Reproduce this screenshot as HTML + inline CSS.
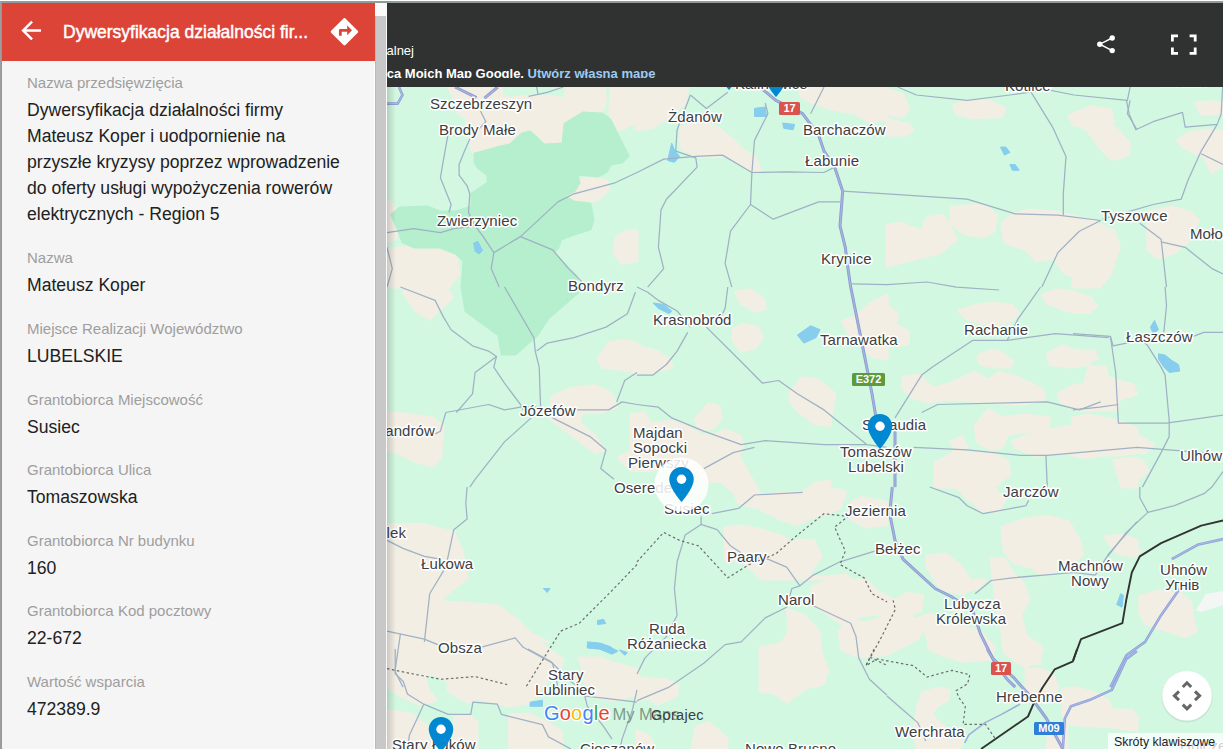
<!DOCTYPE html>
<html><head><meta charset="utf-8">
<style>
*{margin:0;padding:0;box-sizing:border-box}
html,body{width:1223px;height:749px;overflow:hidden;background:#fff;font-family:"Liberation Sans",sans-serif}
#map{position:absolute;left:0;top:0}
.ab{position:absolute}
.lb{position:absolute;left:27px;font-size:15px;color:#9e9e9e;line-height:17px;white-space:nowrap}
.vl{position:absolute;left:27px;font-size:17.6px;color:#212121;line-height:26px;white-space:nowrap}
</style></head><body>
<svg id="map" width="1223" height="749" viewBox="0 0 1223 749"><rect x="387" y="87" width="836" height="662" fill="#d3f8e2"/><polygon points="574.0,180.5 590.0,177.8 606.0,180.5 608.7,188.5 598.0,199.2 579.3,204.5 568.6,199.2" fill="#f3eee4" stroke="#f3eee4" stroke-width="3" stroke-linejoin="round"/><polygon points="616.7,236.6 627.4,231.2 637.0,231.2 637.0,260.6 622.0,263.3 614.0,252.6" fill="#f3eee4" stroke="#f3eee4" stroke-width="3" stroke-linejoin="round"/><polygon points="387.0,249.9 403.0,247.3 440.4,249.9 456.4,257.9 459.1,274.0 448.4,287.1 387.0,287.1" fill="#f3eee4" stroke="#f3eee4" stroke-width="3" stroke-linejoin="round"/><polygon points="387.0,199.2 392.3,204.5 400.4,225.9 395.0,239.2 387.0,241.9" fill="#f3eee4" stroke="#f3eee4" stroke-width="3" stroke-linejoin="round"/><polygon points="637.0,87.0 687.7,87.0 685.1,103.0 669.1,116.4 653.0,127.1 637.0,129.7" fill="#f3eee4" stroke="#f3eee4" stroke-width="3" stroke-linejoin="round"/><polygon points="681.1,127.1 698.4,123.1 717.1,127.1 733.2,140.4 743.8,151.1 754.5,156.4 759.9,169.8 749.2,169.8 741.2,164.5 725.1,156.4 695.8,156.4 682.4,148.4 679.7,137.7" fill="#f3eee4" stroke="#f3eee4" stroke-width="3" stroke-linejoin="round"/><polygon points="797.3,87.0 887.0,87.0 887.0,119.1 869.4,121.7 856.0,113.7 829.3,108.4 813.3,103.0 802.6,97.7" fill="#f3eee4" stroke="#f3eee4" stroke-width="3" stroke-linejoin="round"/><polygon points="887.0,89.7 903.0,95.0 908.4,108.4 903.0,116.4 887.0,113.7" fill="#f3eee4" stroke="#f3eee4" stroke-width="3" stroke-linejoin="round"/><polygon points="887.0,119.1 908.4,124.4 912.4,129.7 905.7,135.1 887.0,135.1" fill="#f3eee4" stroke="#f3eee4" stroke-width="3" stroke-linejoin="round"/><polygon points="953.8,105.7 967.1,100.4 988.5,100.4 1004.5,108.4 1001.9,116.4 972.5,117.7 956.4,113.7" fill="#f3eee4" stroke="#f3eee4" stroke-width="3" stroke-linejoin="round"/><polygon points="1068.6,116.4 1090.0,107.0 1108.7,109.7 1111.4,124.4 1119.4,132.4 1130.1,144.4 1124.7,156.4 1111.4,159.1 1100.7,148.4 1087.3,129.7 1074.0,123.1" fill="#f3eee4" stroke="#f3eee4" stroke-width="3" stroke-linejoin="round"/><polygon points="951.1,207.2 967.1,205.9 983.2,204.5 996.5,215.2 993.8,231.2 983.2,236.6 964.5,233.9 951.1,223.2" fill="#f3eee4" stroke="#f3eee4" stroke-width="3" stroke-linejoin="round"/><polygon points="887.0,225.9 900.4,223.2 921.7,231.2 927.1,217.9 943.1,215.2 956.4,239.2 940.4,252.6 919.1,257.9 897.7,263.3 887.0,266.0" fill="#f3eee4" stroke="#f3eee4" stroke-width="3" stroke-linejoin="round"/><polygon points="1001.9,223.2 1012.5,215.2 1028.6,209.9 1057.9,212.5 1090.0,220.5 1114.0,231.2 1119.4,247.3 1108.7,274.0 1090.0,279.3 1066.0,274.0 1052.6,257.9 1036.6,260.6 1025.9,249.9 1004.5,241.9" fill="#f3eee4" stroke="#f3eee4" stroke-width="3" stroke-linejoin="round"/><polygon points="1073.0,113.7 1089.0,108.4 1110.4,109.7 1113.1,121.7 1107.7,132.4 1126.4,140.4 1129.1,153.8 1115.7,159.1 1102.4,148.4 1089.0,127.1 1073.0,124.4" fill="#f3eee4" stroke="#f3eee4" stroke-width="3" stroke-linejoin="round"/><polygon points="1195.9,103.0 1211.9,101.7 1223.1,103.0 1223.1,113.7 1201.2,113.7" fill="#f3eee4" stroke="#f3eee4" stroke-width="3" stroke-linejoin="round"/><polygon points="1177.2,140.4 1190.5,132.4 1211.9,129.7 1223.1,132.4 1223.1,164.5 1211.9,172.5 1203.9,156.4 1185.2,148.4" fill="#f3eee4" stroke="#f3eee4" stroke-width="3" stroke-linejoin="round"/><polygon points="1073.0,223.2 1094.4,220.5 1110.4,236.6 1118.4,247.3 1110.4,274.0 1099.7,287.1 1073.0,287.1" fill="#f3eee4" stroke="#f3eee4" stroke-width="3" stroke-linejoin="round"/><polygon points="1147.8,212.5 1171.8,207.2 1190.5,212.5 1198.5,220.5 1187.9,241.9 1174.5,252.6 1158.5,257.9 1147.8,249.9" fill="#f3eee4" stroke="#f3eee4" stroke-width="3" stroke-linejoin="round"/><polygon points="408.4,287.0 445.8,287.0 452.4,297.7 440.4,308.4 429.7,319.1 416.4,311.0 403.0,292.3" fill="#f3eee4" stroke="#f3eee4" stroke-width="3" stroke-linejoin="round"/><polygon points="598.0,359.1 608.7,343.1 622.0,340.4 637.0,343.1 637.0,372.5 622.0,369.8 603.3,367.1" fill="#f3eee4" stroke="#f3eee4" stroke-width="3" stroke-linejoin="round"/><polygon points="552.6,396.5 571.3,388.5 595.3,385.8 611.4,393.8 616.7,407.2 600.7,412.5 582.0,412.5 579.3,423.2 595.3,436.6 603.3,449.9 595.3,452.6 574.0,436.6 552.6,420.5 549.9,409.9" fill="#f3eee4" stroke="#f3eee4" stroke-width="3" stroke-linejoin="round"/><polygon points="387.0,412.5 403.0,413.9 432.4,417.9 443.1,425.9 440.4,457.9 432.4,466.0 413.7,460.6 397.7,452.6 387.0,449.9" fill="#f3eee4" stroke="#f3eee4" stroke-width="3" stroke-linejoin="round"/><polygon points="735.8,292.3 749.2,289.7 762.5,297.7 765.2,308.4 754.5,311.0 741.2,303.0" fill="#f3eee4" stroke="#f3eee4" stroke-width="3" stroke-linejoin="round"/><polygon points="733.2,329.7 743.8,324.4 757.2,327.1 762.5,337.7 754.5,348.4 741.2,351.1 733.2,340.4" fill="#f3eee4" stroke="#f3eee4" stroke-width="3" stroke-linejoin="round"/><polygon points="637.0,345.8 655.7,351.1 669.1,359.1 671.7,367.1 653.0,372.5 637.0,372.5" fill="#f3eee4" stroke="#f3eee4" stroke-width="3" stroke-linejoin="round"/><polygon points="842.7,321.7 856.0,316.4 872.0,303.0 887.0,295.0 887.0,359.1 872.0,356.4 864.0,348.4 848.0,332.4" fill="#f3eee4" stroke="#f3eee4" stroke-width="3" stroke-linejoin="round"/><polygon points="789.2,393.8 802.6,377.8 818.6,380.5 834.6,393.8 832.0,412.5 829.3,425.9 813.3,420.5 797.3,409.9" fill="#f3eee4" stroke="#f3eee4" stroke-width="3" stroke-linejoin="round"/><polygon points="887.0,305.7 897.7,313.7 895.0,324.4 908.4,332.4 908.4,343.1 897.7,345.8 887.0,340.4" fill="#f3eee4" stroke="#f3eee4" stroke-width="3" stroke-linejoin="round"/><polygon points="959.1,311.0 975.1,305.7 993.8,303.0 1012.5,305.7 1017.9,313.7 1009.9,321.7 988.5,324.4 967.1,319.1" fill="#f3eee4" stroke="#f3eee4" stroke-width="3" stroke-linejoin="round"/><polygon points="1041.9,295.0 1057.9,289.7 1074.0,292.3 1090.0,297.7 1095.3,305.7 1084.6,311.0 1068.6,311.0 1047.3,303.0" fill="#f3eee4" stroke="#f3eee4" stroke-width="3" stroke-linejoin="round"/><polygon points="977.8,356.4 988.5,351.1 999.2,351.1 1012.5,361.8 1009.9,367.1 993.8,367.1 980.5,364.5" fill="#f3eee4" stroke="#f3eee4" stroke-width="3" stroke-linejoin="round"/><polygon points="1047.3,353.8 1063.3,345.8 1076.6,351.1 1084.6,351.1 1095.3,356.4 1087.3,364.5 1068.6,367.1 1049.9,364.5" fill="#f3eee4" stroke="#f3eee4" stroke-width="3" stroke-linejoin="round"/><polygon points="903.0,377.8 919.1,375.1 932.4,388.5 951.1,383.2 975.1,372.5 988.5,380.5 999.2,372.5 1017.9,377.8 1041.9,388.5 1044.6,399.2 1020.5,404.5 988.5,401.9 945.8,399.2 927.1,401.9 911.0,396.5 903.0,388.5" fill="#f3eee4" stroke="#f3eee4" stroke-width="3" stroke-linejoin="round"/><polygon points="1057.9,393.8 1074.0,385.8 1092.7,383.2 1090.0,367.1 1100.7,369.8 1114.0,388.5 1132.7,388.5 1137.0,393.8 1119.4,399.2 1116.7,409.9 1079.3,409.9 1060.6,401.9" fill="#f3eee4" stroke="#f3eee4" stroke-width="3" stroke-linejoin="round"/><polygon points="975.1,425.9 988.5,409.9 1001.9,417.9 1025.9,415.2 1049.9,417.9 1047.3,428.6 1007.2,433.9 1001.9,447.3 991.2,449.9 977.8,441.9" fill="#f3eee4" stroke="#f3eee4" stroke-width="3" stroke-linejoin="round"/><polygon points="1012.5,441.9 1036.6,431.2 1074.0,425.9 1095.3,417.9 1116.7,420.5 1137.0,428.6 1137.0,452.6 1114.0,455.3 1074.0,452.6 1036.6,455.3 1015.2,447.3" fill="#f3eee4" stroke="#f3eee4" stroke-width="3" stroke-linejoin="round"/><polygon points="951.1,441.9 961.8,436.6 967.1,447.3 956.4,452.6" fill="#f3eee4" stroke="#f3eee4" stroke-width="3" stroke-linejoin="round"/><polygon points="935.1,463.3 953.8,452.6 988.5,452.6 1007.2,460.6 1009.9,474.0 993.8,487.1 935.1,487.1" fill="#f3eee4" stroke="#f3eee4" stroke-width="3" stroke-linejoin="round"/><polygon points="1114.0,460.6 1137.0,457.9 1137.0,487.1 1122.0,487.1" fill="#f3eee4" stroke="#f3eee4" stroke-width="3" stroke-linejoin="round"/><polygon points="1073.0,297.7 1086.4,296.3 1097.0,305.7 1089.0,312.4 1073.0,312.4" fill="#f3eee4" stroke="#f3eee4" stroke-width="3" stroke-linejoin="round"/><polygon points="1073.0,351.1 1094.4,351.1 1097.0,359.1 1073.0,361.8" fill="#f3eee4" stroke="#f3eee4" stroke-width="3" stroke-linejoin="round"/><polygon points="1089.0,367.1 1105.1,367.1 1107.7,377.8 1134.4,385.8 1126.4,396.5 1110.4,401.9 1089.0,401.9 1073.0,404.5 1073.0,388.5 1083.7,385.8" fill="#f3eee4" stroke="#f3eee4" stroke-width="3" stroke-linejoin="round"/><polygon points="1073.0,417.9 1089.0,415.2 1115.7,420.5 1134.4,433.9 1153.1,444.6 1145.1,452.6 1113.1,452.6 1086.4,457.9 1073.0,455.3" fill="#f3eee4" stroke="#f3eee4" stroke-width="3" stroke-linejoin="round"/><polygon points="1126.4,463.3 1142.4,460.6 1147.8,471.3 1137.1,479.3 1126.4,474.0" fill="#f3eee4" stroke="#f3eee4" stroke-width="3" stroke-linejoin="round"/><polygon points="387.0,524.4 421.7,524.4 453.8,532.4 461.8,551.1 467.1,577.8 440.4,599.2 448.4,604.5 488.5,604.5 504.5,612.5 517.9,625.9 525.9,633.9 547.3,641.9 531.2,633.9 496.5,605.9 411.0,599.2 399.0,609.9 399.0,631.2 387.0,635.2" fill="#f3eee4" stroke="#f3eee4" stroke-width="3" stroke-linejoin="round"/><polygon points="579.3,657.9 600.7,657.9 619.4,666.0 637.0,671.3 637.0,687.1 590.0,687.1" fill="#f3eee4" stroke="#f3eee4" stroke-width="3" stroke-linejoin="round"/><polygon points="733.2,487.0 749.2,487.0 765.2,497.7 802.6,492.3 824.0,487.0 845.3,492.3 840.0,508.4 824.0,513.7 807.9,519.1 797.3,524.4 781.2,519.1 759.9,508.4 738.5,503.0" fill="#f3eee4" stroke="#f3eee4" stroke-width="3" stroke-linejoin="round"/><polygon points="850.7,503.0 861.4,497.7 877.4,500.4 887.0,503.0 887.0,524.4 866.7,527.1 850.7,519.1" fill="#f3eee4" stroke="#f3eee4" stroke-width="3" stroke-linejoin="round"/><polygon points="727.8,532.4 743.8,529.7 759.9,540.4 778.6,545.8 797.3,540.4 813.3,540.4 821.3,556.4 807.9,575.1 824.0,577.8 845.3,575.1 850.7,579.1 762.5,579.1 749.2,567.1 730.5,553.8" fill="#f3eee4" stroke="#f3eee4" stroke-width="3" stroke-linejoin="round"/><polygon points="956.4,487.0 993.8,487.0 1004.5,500.4 999.2,511.0 983.2,511.0 967.1,497.7" fill="#f3eee4" stroke="#f3eee4" stroke-width="3" stroke-linejoin="round"/><polygon points="1001.9,527.1 1025.9,519.1 1047.3,516.4 1068.6,521.7 1079.3,540.4 1082.0,553.8 1068.6,567.1 1041.9,575.1 1031.2,567.1 1012.5,561.8 1004.5,551.1" fill="#f3eee4" stroke="#f3eee4" stroke-width="3" stroke-linejoin="round"/><polygon points="1106.0,537.7 1122.0,535.1 1137.0,540.4 1137.0,551.1 1116.7,551.1" fill="#f3eee4" stroke="#f3eee4" stroke-width="3" stroke-linejoin="round"/><polygon points="927.1,556.4 945.8,553.8 959.1,564.5 967.1,575.1 972.5,588.5 961.8,593.8 940.4,588.5 927.1,567.1" fill="#f3eee4" stroke="#f3eee4" stroke-width="3" stroke-linejoin="round"/><polygon points="991.2,559.1 1004.5,559.1 1012.5,572.5 1023.2,583.2 1028.6,599.2 1020.5,615.2 1025.9,636.6 1041.9,647.3 1039.2,663.3 1020.5,663.3 1004.5,652.6 1001.9,631.2 996.5,604.5 993.8,583.2" fill="#f3eee4" stroke="#f3eee4" stroke-width="3" stroke-linejoin="round"/><polygon points="1052.6,679.3 1036.6,671.3 1025.9,687.1 1057.9,687.1" fill="#f3eee4" stroke="#f3eee4" stroke-width="3" stroke-linejoin="round"/><polygon points="1073.0,537.7 1081.0,545.8 1081.0,556.4 1073.0,559.1" fill="#f3eee4" stroke="#f3eee4" stroke-width="3" stroke-linejoin="round"/><polygon points="1105.1,537.7 1121.1,535.1 1129.1,545.8 1139.8,551.1 1134.4,556.4 1118.4,553.8" fill="#f3eee4" stroke="#f3eee4" stroke-width="3" stroke-linejoin="round"/><polygon points="1139.8,596.5 1158.5,591.2 1179.8,593.8 1190.5,601.9 1193.2,620.5 1195.9,631.2 1185.2,636.6 1161.1,628.6 1145.1,623.2 1139.8,612.5" fill="#f3eee4" stroke="#f3eee4" stroke-width="3" stroke-linejoin="round"/><polygon points="637.0,677.6 655.4,679.7 665.6,679.7 677.9,685.8 675.8,696.0 657.4,704.2 649.3,698.1 637.0,700.1" fill="#f3eee4" stroke="#f3eee4" stroke-width="3" stroke-linejoin="round"/><polygon points="696.3,726.7 708.5,722.6 718.8,730.8 726.9,738.9 726.9,749.0 692.2,749.0" fill="#f3eee4" stroke="#f3eee4" stroke-width="3" stroke-linejoin="round"/><polygon points="637.0,730.8 649.3,736.9 655.4,749.0 637.0,749.0" fill="#f3eee4" stroke="#f3eee4" stroke-width="3" stroke-linejoin="round"/><polygon points="841.4,649.0 872.1,649.0 870.0,655.1 853.7,655.1" fill="#f3eee4" stroke="#f3eee4" stroke-width="3" stroke-linejoin="round"/><polygon points="932.0,649.0 989.2,649.0 981.0,657.2 948.3,655.1" fill="#f3eee4" stroke="#f3eee4" stroke-width="3" stroke-linejoin="round"/><polygon points="1009.6,649.0 1042.4,649.0 1034.2,661.3 1026.0,667.4 1013.7,659.2" fill="#f3eee4" stroke="#f3eee4" stroke-width="3" stroke-linejoin="round"/><polygon points="1026.0,669.4 1042.4,669.4 1054.6,677.6 1056.7,689.9 1046.4,702.1 1034.2,702.1 1028.0,694.0 1026.0,681.7" fill="#f3eee4" stroke="#f3eee4" stroke-width="3" stroke-linejoin="round"/><polygon points="1062.8,689.9 1075.1,687.8 1091.4,691.9 1107.8,700.1 1111.9,710.3 1132.3,710.3 1137.0,716.5 1137.0,730.8 1111.9,726.7 1071.0,724.6 1062.8,714.4" fill="#f3eee4" stroke="#f3eee4" stroke-width="3" stroke-linejoin="round"/><polygon points="1050.5,726.7 1066.9,724.6 1066.9,749.0 1046.4,749.0" fill="#f3eee4" stroke="#f3eee4" stroke-width="3" stroke-linejoin="round"/><polygon points="387.0,634.8 399.3,632.7 399.3,610.2 411.5,600.0 497.4,606.1 517.8,620.4 530.1,634.8 550.5,651.1 562.8,659.3 560.8,667.5 550.5,677.7 542.4,685.9 530.1,702.2 509.6,706.3 476.9,698.1 468.8,702.2 456.5,696.1 448.3,689.9 448.3,681.8 438.1,675.6 423.8,673.6 427.9,689.9 436.1,700.2 419.7,704.3 401.3,696.1 387.0,685.9" fill="#f3eee4" stroke="#f3eee4" stroke-width="3" stroke-linejoin="round"/><polygon points="581.2,659.3 601.6,661.3 622.1,665.4 637.0,669.5 637.0,694.0 611.9,700.2 591.4,696.1 583.2,677.7" fill="#f3eee4" stroke="#f3eee4" stroke-width="3" stroke-linejoin="round"/><polygon points="387.0,710.4 411.5,714.5 421.8,722.6 434.0,730.8 432.0,749.0 387.0,749.0" fill="#f3eee4" stroke="#f3eee4" stroke-width="3" stroke-linejoin="round"/><polygon points="454.5,714.5 468.8,714.5 476.9,722.6 476.9,749.0 454.5,749.0" fill="#f3eee4" stroke="#f3eee4" stroke-width="3" stroke-linejoin="round"/><polygon points="509.6,714.5 530.1,714.5 546.4,722.6 560.8,730.8 562.8,749.0 509.6,749.0" fill="#f3eee4" stroke="#f3eee4" stroke-width="3" stroke-linejoin="round"/><polygon points="448.3,87.0 501.5,87.0 501.5,95.2 509.6,98.2 530.1,96.2 550.5,96.2 564.8,99.3 566.9,87.0 603.7,87.0 605.7,99.3 601.6,113.6 583.2,112.6 564.8,123.8 562.8,144.2 544.4,145.3 540.3,136.1 530.1,132.0 521.9,134.0 509.6,145.3 495.3,148.3 483.1,152.4 474.9,154.5 470.8,146.3 468.8,136.1 466.7,117.7 456.5,111.5 454.5,97.2" fill="#f3eee4" stroke="#f3eee4" stroke-width="3" stroke-linejoin="round"/><polygon points="611.9,132.0 624.1,127.9 637.0,121.8 637.0,87.0 611.9,87.0 609.8,107.4" fill="#f3eee4" stroke="#f3eee4" stroke-width="3" stroke-linejoin="round"/><polygon points="631.3,415.0 644.1,412.8 650.5,423.5 669.7,421.4 682.6,423.5 699.7,434.2 712.5,436.3 725.3,429.9 740.3,436.3 742.4,444.9 738.1,455.6 755.2,485.5 759.5,494.0 746.7,496.2 733.8,491.9 721.0,481.2 708.2,481.2 691.1,470.5 669.7,464.1 650.5,470.5 631.3,470.5 618.5,457.7 631.3,451.3 631.3,427.8" fill="#f3eee4" stroke="#f3eee4" stroke-width="3" stroke-linejoin="round"/><polygon points="695.4,419.2 708.2,404.3 718.9,406.4 721.0,419.2 712.5,427.8 699.7,429.9" fill="#f3eee4" stroke="#f3eee4" stroke-width="3" stroke-linejoin="round"/><polygon points="742.4,498.3 772.3,494.0 804.4,491.9 815.0,483.3 830.0,481.2 830.0,513.2 804.4,517.5 785.1,515.4 768.0,506.8" fill="#f3eee4" stroke="#f3eee4" stroke-width="3" stroke-linejoin="round"/><polygon points="789.4,400.0 830.0,400.0 830.0,425.6 815.0,423.5 800.1,412.8" fill="#f3eee4" stroke="#f3eee4" stroke-width="3" stroke-linejoin="round"/><polygon points="725.3,528.2 742.4,526.1 761.6,530.3 783.0,536.8 793.7,545.3 793.7,560.0 725.3,560.0" fill="#f3eee4" stroke="#f3eee4" stroke-width="3" stroke-linejoin="round"/><polygon points="787.1,609.3 805.1,616.1 818.7,631.9 820.9,652.2 827.7,670.3 823.2,683.8 805.1,688.3 787.1,701.8 773.5,692.8 760.0,690.6 760.0,647.7 782.6,643.2 789.3,629.6" fill="#f3eee4" stroke="#f3eee4" stroke-width="3" stroke-linejoin="round"/><polygon points="811.9,586.8 832.2,580.0 866.0,580.0 879.6,593.5 895.4,600.3 906.7,593.5 922.5,595.8 920.2,611.6 899.9,616.1 877.3,613.8 859.3,616.1 843.5,625.1 827.7,613.8 814.2,604.8" fill="#f3eee4" stroke="#f3eee4" stroke-width="3" stroke-linejoin="round"/><polygon points="839.0,631.9 850.3,620.6 866.0,622.9 886.4,616.1 906.7,613.8 924.7,625.1 917.9,638.7 899.9,647.7 886.4,654.5 859.3,656.7 841.2,645.4" fill="#f3eee4" stroke="#f3eee4" stroke-width="3" stroke-linejoin="round"/><polygon points="917.9,618.4 931.5,613.8 940.5,622.9 963.1,627.4 981.1,631.9 985.6,638.7 994.7,647.7 990.1,659.0 963.1,661.2 940.5,654.5 929.2,647.7 927.0,634.2" fill="#f3eee4" stroke="#f3eee4" stroke-width="3" stroke-linejoin="round"/><polygon points="958.6,580.0 985.6,580.0 976.6,589.0 963.1,589.0" fill="#f3eee4" stroke="#f3eee4" stroke-width="3" stroke-linejoin="round"/><polygon points="922.5,692.8 938.2,688.3 949.5,690.6 947.3,699.6 936.0,706.4 931.5,715.4 940.5,724.4 954.0,733.4 963.1,742.5 958.6,749.0 917.9,749.0 913.4,733.4 917.9,706.4" fill="#f3eee4" stroke="#f3eee4" stroke-width="3" stroke-linejoin="round"/><polygon points="475,154 490,150 500,147 510,145 522,134 530,132 544,145 563,144 565,124 583,113 602,114 610,120 624,148 628,156 622,162 611,164 606,172 598,176 577,174 579,183 574,191 563,196 574,202 590,204 593,220 590,229 574,234 561,239 558,247 553,253 576,276 578,292 548,318 537,335 515,354 502,354 499,335 466,311 462,287 464,261 456,253 440,247 414,247 403,242 398,229 392,215 400,208 427,207 440,212 456,212 472,207 472,194 488,183 488,175 478,167 475,162" fill="#b5efcd" stroke="#b5efcd" stroke-width="3" stroke-linejoin="round"/><polygon points="797.3,335.1 810.6,325.7 820.0,329.7 816.0,337.7 803.9,343.1" fill="#86cdee" stroke="#86cdee" stroke-width="1" stroke-linejoin="round"/><polygon points="653.0,303.0 663.7,304.4 671.7,311.0 669.1,313.7 658.4,308.4" fill="#86cdee" stroke="#86cdee" stroke-width="1" stroke-linejoin="round"/><polygon points="1150.5,327.1 1154.5,320.4 1158.5,329.7 1153.1,333.7" fill="#86cdee" stroke="#86cdee" stroke-width="1" stroke-linejoin="round"/><polygon points="1158.5,353.8 1165.1,355.1 1171.8,360.5 1178.5,364.5 1179.8,371.1 1169.2,372.5 1163.8,367.1 1158.5,359.1" fill="#86cdee" stroke="#86cdee" stroke-width="1" stroke-linejoin="round"/><polygon points="587.1,641.9 600.7,643.2 611.4,647.3 606.0,649.9 590.0,647.3" fill="#86cdee" stroke="#86cdee" stroke-width="1" stroke-linejoin="round"/><polygon points="619.4,649.9 627.4,652.6 624.7,655.3" fill="#86cdee" stroke="#86cdee" stroke-width="1" stroke-linejoin="round"/><polygon points="543.2,588.5 549.9,588.5 547.3,592.5" fill="#86cdee" stroke="#86cdee" stroke-width="1" stroke-linejoin="round"/><polygon points="667.7,160.5 671.7,143.1 674.9,151.1 679.7,156.4 674.4,162.3" fill="#86cdee" stroke="#86cdee" stroke-width="1" stroke-linejoin="round"/><polygon points="754.5,108.4 765.2,107.0 766.5,116.4 754.5,116.4" fill="#86cdee" stroke="#86cdee" stroke-width="1" stroke-linejoin="round"/><polygon points="782.6,123.1 794.6,124.4 793.2,129.7 783.9,128.4" fill="#86cdee" stroke="#86cdee" stroke-width="1" stroke-linejoin="round"/><polygon points="1116.7,604.5 1120.7,593.8 1123.4,595.2 1122.0,607.2" fill="#86cdee" stroke="#86cdee" stroke-width="1" stroke-linejoin="round"/><polygon points="473.8,243.2 477.8,241.4 482.6,250.5 479.1,253.9 475.1,251.3" fill="#86cdee" stroke="#86cdee" stroke-width="1" stroke-linejoin="round"/><polygon points="530.1,702.2 542.4,700.2 542.4,706.3 530.1,706.3" fill="#86cdee" stroke="#86cdee" stroke-width="1" stroke-linejoin="round"/><polygon points="597.5,620.4 603.7,619.4 605.7,623.5 597.5,624.5" fill="#86cdee" stroke="#86cdee" stroke-width="1" stroke-linejoin="round"/><polygon points="587.3,643.9 595.5,642.9 607.8,646.0 618.0,651.1 611.9,654.2 599.6,649.1 587.3,648.0" fill="#86cdee" stroke="#86cdee" stroke-width="1" stroke-linejoin="round"/><polygon points="1000.5,147.1 1005.9,147.1 1009.9,152.4 1004.5,155.1" fill="#86cdee" stroke="#86cdee" stroke-width="1" stroke-linejoin="round"/><polygon points="1009.9,164.5 1015.2,164.5 1019.2,170.3 1012.5,170.3" fill="#86cdee" stroke="#86cdee" stroke-width="1" stroke-linejoin="round"/><polygon points="1196,610 1206,594 1223,591 1223,605 1201,612" fill="#f4f6f5"/><polyline points="480.5,111.0 485.8,121.7 469.8,139.1 464.5,151.1 459.1,164.5 459.1,175.1 467.1,185.8 469.8,193.8 468.5,212.5 475.1,225.9 483.2,236.6 493.8,252.6 491.2,268.6 499.2,287.1" fill="none" stroke="#9fb1c4" stroke-width="1.25" stroke-linejoin="round"/><polyline points="387.0,232.6 413.7,228.6 440.4,232.6 453.8,228.6 475.1,225.9" fill="none" stroke="#9fb1c4" stroke-width="1.25" stroke-linejoin="round"/><polyline points="493.8,252.6 520.5,236.6 557.9,201.9 574.0,193.8 614.0,183.2 637.0,172.5" fill="none" stroke="#9fb1c4" stroke-width="1.25" stroke-linejoin="round"/><polyline points="520.5,236.6 552.6,249.9 568.6,268.6 587.3,287.1" fill="none" stroke="#9fb1c4" stroke-width="1.25" stroke-linejoin="round"/><polyline points="387.0,103.6 397.7,103.6 402.5,95.0 399.0,87.0" fill="none" stroke="#8d9fd8" stroke-width="2.6" stroke-linejoin="round"/><polyline points="387.0,103.6 397.7,103.6 402.5,95.0 399.0,87.0" fill="none" stroke="#b9c4ec" stroke-width="0.8" stroke-linejoin="round"/><polyline points="455.1,87.0 476.5,97.7" fill="none" stroke="#8b9bd0" stroke-width="3" stroke-linejoin="round"/><polyline points="455.1,87.0 476.5,97.7" fill="none" stroke="#aab6e0" stroke-width="1.2" stroke-linejoin="round"/><polyline points="497.8,87.0 484.5,98.2" fill="none" stroke="#8b9bd0" stroke-width="3" stroke-linejoin="round"/><polyline points="497.8,87.0 484.5,98.2" fill="none" stroke="#aab6e0" stroke-width="1.2" stroke-linejoin="round"/><polyline points="528.6,96.3 547.3,92.3 563.3,87.0" fill="none" stroke="#9fb1c4" stroke-width="1.25" stroke-linejoin="round"/><polyline points="536.6,87.0 538.2,95.0" fill="none" stroke="#9fb1c4" stroke-width="1.25" stroke-linejoin="round"/><polyline points="448.4,132.4 443.1,161.8 440.4,177.8 451.1,204.5 449.0,212.5" fill="none" stroke="#9fb1c4" stroke-width="1.25" stroke-linejoin="round"/><polyline points="387.0,247.3 392.3,268.6 387.0,287.1" fill="none" stroke="#9fb1c4" stroke-width="1.25" stroke-linejoin="round"/><polyline points="759.9,87.0 775.9,100.4 802.6,113.7 818.6,135.1 824.0,151.1 834.6,167.1 842.7,191.2 840.0,225.9 845.3,247.3 848.0,268.6 850.7,287.1" fill="none" stroke="#8b9bd0" stroke-width="3" stroke-linejoin="round"/><polyline points="759.9,87.0 775.9,100.4 802.6,113.7 818.6,135.1 824.0,151.1 834.6,167.1 842.7,191.2 840.0,225.9 845.3,247.3 848.0,268.6 850.7,287.1" fill="none" stroke="#aab6e0" stroke-width="1.2" stroke-linejoin="round"/><polyline points="824.0,87.0 810.6,113.7" fill="none" stroke="#9fb1c4" stroke-width="1.25" stroke-linejoin="round"/><polyline points="637.0,172.5 663.7,159.1 695.8,156.4 722.5,155.1 751.9,172.5 786.6,171.9 824.0,172.5 834.6,167.1" fill="none" stroke="#9fb1c4" stroke-width="1.25" stroke-linejoin="round"/><polyline points="751.9,172.5 754.5,140.4 767.9,113.7 765.2,103.0" fill="none" stroke="#9fb1c4" stroke-width="1.25" stroke-linejoin="round"/><polyline points="675.7,151.1 677.1,129.7 690.4,95.0" fill="none" stroke="#9fb1c4" stroke-width="1.25" stroke-linejoin="round"/><polyline points="675.7,151.1 695.8,157.8 697.1,167.1 666.4,199.2 661.0,209.9 658.4,247.3 663.7,268.6 647.7,287.1" fill="none" stroke="#9fb1c4" stroke-width="1.25" stroke-linejoin="round"/><polyline points="751.9,172.5 750.5,204.5 730.5,231.2 725.1,263.3 731.8,287.1" fill="none" stroke="#9fb1c4" stroke-width="1.25" stroke-linejoin="round"/><polyline points="750.5,204.5 773.2,219.2 818.6,201.9 840.0,201.9" fill="none" stroke="#9fb1c4" stroke-width="1.25" stroke-linejoin="round"/><polyline points="842.7,191.2 887.0,193.8" fill="none" stroke="#9fb1c4" stroke-width="1.25" stroke-linejoin="round"/><polyline points="690.4,95.0 706.4,108.4 727.8,92.3" fill="none" stroke="#9fb1c4" stroke-width="1.25" stroke-linejoin="round"/><polyline points="897.7,87.0 916.4,95.0 967.1,100.4 1009.9,95.0 1047.3,89.7 1074.0,95.0 1127.4,100.4 1130.1,87.0" fill="none" stroke="#9fb1c4" stroke-width="1.25" stroke-linejoin="round"/><polyline points="1031.2,92.3 1052.6,127.1 1066.0,156.4 1063.3,193.8 1063.3,215.2" fill="none" stroke="#9fb1c4" stroke-width="1.25" stroke-linejoin="round"/><polyline points="887.0,193.8 967.1,199.2 1015.2,213.9 1057.9,215.2 1100.7,220.5" fill="none" stroke="#9fb1c4" stroke-width="1.25" stroke-linejoin="round"/><polyline points="1100.7,220.5 1079.3,231.2 1057.9,252.6 1041.9,287.1" fill="none" stroke="#9fb1c4" stroke-width="1.25" stroke-linejoin="round"/><polyline points="852.0,283.8 887.0,284.6 927.1,282.0 956.4,287.1 999.2,290.0" fill="none" stroke="#9fb1c4" stroke-width="1.25" stroke-linejoin="round"/><polyline points="1130.1,100.4 1127.4,113.7 1137.0,129.7" fill="none" stroke="#9fb1c4" stroke-width="1.25" stroke-linejoin="round"/><polyline points="1126.4,100.4 1129.1,113.7 1135.8,129.7 1153.1,121.7 1182.5,112.4 1185.2,127.1 1217.2,124.4 1221.2,113.7 1222.6,87.0" fill="none" stroke="#9fb1c4" stroke-width="1.25" stroke-linejoin="round"/><polyline points="1217.2,124.4 1201.2,151.1 1187.9,180.5 1181.2,199.2 1153.1,204.5 1102.4,219.2" fill="none" stroke="#9fb1c4" stroke-width="1.25" stroke-linejoin="round"/><polyline points="1139.8,223.2 1161.1,239.2 1166.5,287.1" fill="none" stroke="#9fb1c4" stroke-width="1.25" stroke-linejoin="round"/><polyline points="1161.1,241.9 1185.2,247.3 1211.9,268.6 1223.1,274.0" fill="none" stroke="#9fb1c4" stroke-width="1.25" stroke-linejoin="round"/><polyline points="1201.2,153.8 1223.1,164.5" fill="none" stroke="#9fb1c4" stroke-width="1.25" stroke-linejoin="round"/><polyline points="400.4,287.0 435.1,300.4 443.1,316.4 451.1,329.7 472.5,345.8 488.5,351.1 496.5,356.4 493.8,367.1 504.5,383.2 520.5,404.5 523.2,409.9" fill="none" stroke="#9fb1c4" stroke-width="1.25" stroke-linejoin="round"/><polyline points="504.5,287.0 533.9,337.7 535.2,351.1 539.2,367.1 540.6,407.2" fill="none" stroke="#9fb1c4" stroke-width="1.25" stroke-linejoin="round"/><polyline points="536.6,351.1 547.3,343.1 574.0,337.7 606.0,327.1 627.4,313.7 635.4,292.3" fill="none" stroke="#9fb1c4" stroke-width="1.25" stroke-linejoin="round"/><polyline points="496.5,356.4 475.1,372.5 472.5,393.8 456.4,412.5" fill="none" stroke="#9fb1c4" stroke-width="1.25" stroke-linejoin="round"/><polyline points="445.8,412.5 440.4,431.2 435.1,433.9" fill="none" stroke="#9fb1c4" stroke-width="1.25" stroke-linejoin="round"/><polyline points="445.8,412.5 488.5,404.5 504.5,409.9 520.5,407.2 540.6,407.2" fill="none" stroke="#9fb1c4" stroke-width="1.25" stroke-linejoin="round"/><polyline points="576.6,409.9 608.7,409.9 622.0,401.9 637.0,404.5" fill="none" stroke="#9fb1c4" stroke-width="1.25" stroke-linejoin="round"/><polyline points="531.2,417.9 504.5,441.9 475.1,479.3 469.8,487.1" fill="none" stroke="#9fb1c4" stroke-width="1.25" stroke-linejoin="round"/><polyline points="552.6,417.9 590.0,436.6 606.0,449.9 600.7,468.6 614.0,479.3" fill="none" stroke="#9fb1c4" stroke-width="1.25" stroke-linejoin="round"/><polyline points="616.7,401.9 624.7,380.5 637.0,372.5" fill="none" stroke="#9fb1c4" stroke-width="1.25" stroke-linejoin="round"/><polyline points="637.0,287.0 647.7,292.3 658.4,300.4 677.1,311.0 690.4,327.1" fill="none" stroke="#9fb1c4" stroke-width="1.25" stroke-linejoin="round"/><polyline points="727.8,287.0 725.1,308.4 719.8,319.1" fill="none" stroke="#9fb1c4" stroke-width="1.25" stroke-linejoin="round"/><polyline points="687.7,332.4 677.1,351.1 666.4,364.5 653.0,375.1 637.0,375.1" fill="none" stroke="#9fb1c4" stroke-width="1.25" stroke-linejoin="round"/><polyline points="706.4,327.1 741.2,361.8 762.5,383.2 778.6,380.5 797.3,393.8 824.0,409.9 866.7,444.6 887.0,447.3" fill="none" stroke="#9fb1c4" stroke-width="1.25" stroke-linejoin="round"/><polyline points="637.0,404.5 658.4,407.2 671.7,417.9 703.8,431.2 741.2,444.6 765.2,440.6 824.0,444.6 866.7,444.6" fill="none" stroke="#9fb1c4" stroke-width="1.25" stroke-linejoin="round"/><polyline points="850.7,287.0 861.4,340.4 872.0,393.8 877.4,425.9" fill="none" stroke="#8b9bd0" stroke-width="3" stroke-linejoin="round"/><polyline points="850.7,287.0 861.4,340.4 872.0,393.8 877.4,425.9" fill="none" stroke="#aab6e0" stroke-width="1.2" stroke-linejoin="round"/><polyline points="703.8,468.6 733.2,452.6 754.5,447.3" fill="none" stroke="#9fb1c4" stroke-width="1.25" stroke-linejoin="round"/><polyline points="1040.6,287.0 1031.2,300.4 1017.9,319.1 1007.2,340.4" fill="none" stroke="#9fb1c4" stroke-width="1.25" stroke-linejoin="round"/><polyline points="895.0,417.9 921.7,375.1 932.4,367.1 972.5,340.4 1007.2,340.4 1055.3,333.7 1108.7,337.7" fill="none" stroke="#9fb1c4" stroke-width="1.25" stroke-linejoin="round"/><polyline points="921.7,412.5 937.7,404.5 1047.3,401.9 1079.3,409.9 1100.7,401.9" fill="none" stroke="#9fb1c4" stroke-width="1.25" stroke-linejoin="round"/><polyline points="913.7,447.3 967.1,449.9 1020.5,455.3 1047.3,455.3 1137.0,447.3 1236.9,455.3" fill="none" stroke="#9fb1c4" stroke-width="1.25" stroke-linejoin="round"/><polyline points="1045.9,455.3 1047.3,487.1" fill="none" stroke="#9fb1c4" stroke-width="1.25" stroke-linejoin="round"/><polyline points="895.0,428.6 895.0,487.1" fill="none" stroke="#8b9bd0" stroke-width="3" stroke-linejoin="round"/><polyline points="895.0,428.6 895.0,487.1" fill="none" stroke="#aab6e0" stroke-width="1.2" stroke-linejoin="round"/><polyline points="1073.0,333.7 1110.4,336.4 1113.1,345.8 1126.4,343.1 1142.4,340.4 1147.8,345.8 1161.1,367.1 1165.1,375.1 1169.2,420.5 1169.2,436.6 1161.1,452.6 1142.4,487.1" fill="none" stroke="#9fb1c4" stroke-width="1.25" stroke-linejoin="round"/><polyline points="1193.2,336.4 1203.9,332.4 1223.1,332.4" fill="none" stroke="#9fb1c4" stroke-width="1.25" stroke-linejoin="round"/><polyline points="1110.4,336.4 1115.7,372.5 1118.4,423.2 1166.5,423.2 1223.1,415.2" fill="none" stroke="#9fb1c4" stroke-width="1.25" stroke-linejoin="round"/><polyline points="1073.0,409.9 1099.7,407.2 1118.4,404.5" fill="none" stroke="#9fb1c4" stroke-width="1.25" stroke-linejoin="round"/><polyline points="1165.1,287.0 1166.5,305.7 1163.8,332.4" fill="none" stroke="#9fb1c4" stroke-width="1.25" stroke-linejoin="round"/><polyline points="1223.1,471.3 1211.9,487.1" fill="none" stroke="#9fb1c4" stroke-width="1.25" stroke-linejoin="round"/><polyline points="467.1,487.0 465.8,503.0 467.1,519.1 453.8,529.7 445.8,567.1 429.7,593.8 424.4,641.9" fill="none" stroke="#9fb1c4" stroke-width="1.25" stroke-linejoin="round"/><polyline points="387.0,540.4 403.0,548.4 424.4,556.4 440.4,559.1" fill="none" stroke="#9fb1c4" stroke-width="1.25" stroke-linejoin="round"/><polyline points="387.0,631.2 424.4,639.2 437.7,644.6 480.5,647.3 515.2,637.9 523.2,647.3 552.6,663.3 557.9,687.1" fill="none" stroke="#9fb1c4" stroke-width="1.25" stroke-linejoin="round"/><polyline points="400.4,633.9 395.0,671.3 403.0,687.1" fill="none" stroke="#9fb1c4" stroke-width="1.25" stroke-linejoin="round"/><polyline points="637.0,564.5 611.4,591.2 579.3,623.2 560.6,631.2 547.3,652.6 525.9,687.1" fill="none" stroke="#6d6d6d" stroke-width="1.2" stroke-dasharray="2.5,2.5"/><polyline points="387.0,668.6 413.7,674.0 440.4,679.3 475.1,676.6 507.2,684.6" fill="none" stroke="#6d6d6d" stroke-width="1.2" stroke-dasharray="2.5,2.5"/><polyline points="701.1,516.4 701.1,524.4 685.1,535.1 677.1,561.8 674.4,588.5 677.1,615.2 666.4,636.6 645.0,657.9 637.0,674.0" fill="none" stroke="#9fb1c4" stroke-width="1.25" stroke-linejoin="round"/><polyline points="701.1,524.4 717.1,529.7 730.5,545.8 746.5,556.4 767.9,559.1 786.6,567.1 799.9,585.8 791.9,588.5 786.6,607.2 765.2,617.9 741.2,641.9 725.1,644.6 703.8,663.3 669.1,687.1 637.0,700.7" fill="none" stroke="#9fb1c4" stroke-width="1.25" stroke-linejoin="round"/><polyline points="711.8,513.7 738.5,508.4 754.5,495.0 802.6,492.3" fill="none" stroke="#9fb1c4" stroke-width="1.25" stroke-linejoin="round"/><polyline points="799.9,585.8 813.3,575.1 840.0,561.8 874.7,551.1" fill="none" stroke="#9fb1c4" stroke-width="1.25" stroke-linejoin="round"/><polyline points="810.6,604.5 850.7,623.2 856.0,636.6 858.7,657.9 869.4,679.3 887.0,695.3" fill="none" stroke="#9fb1c4" stroke-width="1.25" stroke-linejoin="round"/><polyline points="637.0,561.8 663.7,532.4 679.7,540.4 698.4,545.8 727.8,577.8 749.2,564.5 775.9,553.8 797.3,535.1 824.0,513.7 848.0,516.4 834.6,527.1 845.3,551.1 840.0,564.5 864.0,577.8 872.0,593.8 887.0,601.9" fill="none" stroke="#6d6d6d" stroke-width="1.2" stroke-dasharray="2.5,2.5"/><polyline points="892.3,487.0 889.7,513.7 895.0,540.4 903.0,559.1 935.1,588.5 951.1,596.5 972.5,609.9 980.5,633.9 993.8,660.6 1007.2,679.3 1015.2,687.1" fill="none" stroke="#8b9bd0" stroke-width="3" stroke-linejoin="round"/><polyline points="892.3,487.0 889.7,513.7 895.0,540.4 903.0,559.1 935.1,588.5 951.1,596.5 972.5,609.9 980.5,633.9 993.8,660.6 1007.2,679.3 1015.2,687.1" fill="none" stroke="#aab6e0" stroke-width="1.2" stroke-linejoin="round"/><polyline points="929.7,487.0 959.1,497.7 967.1,505.7 983.2,513.7 1025.9,505.7 1028.6,500.4" fill="none" stroke="#9fb1c4" stroke-width="1.25" stroke-linejoin="round"/><polyline points="975.1,593.8 991.2,580.5 1012.5,577.8 1074.0,572.5 1095.3,575.1" fill="none" stroke="#9fb1c4" stroke-width="1.25" stroke-linejoin="round"/><polyline points="1095.3,575.1 1108.7,553.8 1137.0,521.7" fill="none" stroke="#9fb1c4" stroke-width="1.25" stroke-linejoin="round"/><polyline points="1139.8,487.0 1139.8,497.7 1147.8,512.4 1174.5,505.7 1203.9,493.7 1211.9,487.0" fill="none" stroke="#9fb1c4" stroke-width="1.25" stroke-linejoin="round"/><polyline points="1147.8,512.4 1126.4,532.4 1107.7,556.4" fill="none" stroke="#9fb1c4" stroke-width="1.25" stroke-linejoin="round"/><polyline points="1223.1,520.4 1201.2,525.7 1161.1,543.1 1139.8,556.4 1131.8,572.5 1126.4,599.2 1122.4,623.2 1081.0,639.2 1073.0,660.6" fill="none" stroke="#333" stroke-width="1.9" stroke-linejoin="round"/><polyline points="1223.1,539.1 1198.5,544.4 1171.8,559.1" fill="none" stroke="#8d9fd8" stroke-width="2.6" stroke-linejoin="round"/><polyline points="1223.1,539.1 1198.5,544.4 1171.8,559.1" fill="none" stroke="#b9c4ec" stroke-width="0.8" stroke-linejoin="round"/><polyline points="1179.8,588.5 1161.1,615.2 1145.1,641.9 1126.4,655.3 1110.4,687.1" fill="none" stroke="#8d9fd8" stroke-width="2.6" stroke-linejoin="round"/><polyline points="1179.8,588.5 1161.1,615.2 1145.1,641.9 1126.4,655.3 1110.4,687.1" fill="none" stroke="#b9c4ec" stroke-width="0.8" stroke-linejoin="round"/><polyline points="395.2,649.0 395.2,673.5 403.4,681.7 407.4,694.0 423.8,704.2 448.3,714.4 470.8,714.4 472.9,702.1 497.4,704.2 501.5,714.4 542.4,724.6 548.5,736.9 571.0,749.0" fill="none" stroke="#9fb1c4" stroke-width="1.25" stroke-linejoin="round"/><polyline points="423.8,704.2 409.5,734.9 407.4,749.0" fill="none" stroke="#9fb1c4" stroke-width="1.25" stroke-linejoin="round"/><polyline points="528.0,649.0 550.5,661.3 571.0,681.7 583.2,689.9 587.3,706.2 603.7,726.7 611.9,738.9" fill="none" stroke="#9fb1c4" stroke-width="1.25" stroke-linejoin="round"/><polyline points="637.0,689.9 632.3,710.3 622.1,738.9 620.0,749.0" fill="none" stroke="#9fb1c4" stroke-width="1.25" stroke-linejoin="round"/><polyline points="583.2,696.0 603.7,698.1 637.0,702.1" fill="none" stroke="#9fb1c4" stroke-width="1.25" stroke-linejoin="round"/><polyline points="874.1,649.0 870.0,657.2 865.9,665.4" fill="none" stroke="#6d6d6d" stroke-width="1.2" stroke-dasharray="2.5,2.5"/><polyline points="870.0,657.2 887.0,665.4" fill="none" stroke="#6d6d6d" stroke-width="1.2" stroke-dasharray="2.5,2.5"/><polyline points="987.2,649.0 993.3,659.2 1013.7,677.6 1030.1,696.0 1046.4,718.5 1062.8,749.0" fill="none" stroke="#8b9bd0" stroke-width="3" stroke-linejoin="round"/><polyline points="987.2,649.0 993.3,659.2 1013.7,677.6 1030.1,696.0 1046.4,718.5 1062.8,749.0" fill="none" stroke="#aab6e0" stroke-width="1.2" stroke-linejoin="round"/><polyline points="1077.1,649.0 1073.0,661.3 1054.6,669.4 1042.4,687.8 1034.2,702.1 1028.0,716.5 981.0,749.0" fill="none" stroke="#333" stroke-width="1.9" stroke-linejoin="round"/><polyline points="1137.0,651.0 1126.2,659.2 1111.9,689.9 1089.4,700.1 1071.0,706.2 1064.8,718.5 1062.8,749.0" fill="none" stroke="#8d9fd8" stroke-width="2.6" stroke-linejoin="round"/><polyline points="1137.0,651.0 1126.2,659.2 1111.9,689.9 1089.4,700.1 1071.0,706.2 1064.8,718.5 1062.8,749.0" fill="none" stroke="#b9c4ec" stroke-width="0.8" stroke-linejoin="round"/><polyline points="1019.9,704.2 1001.5,714.4 985.1,722.6 968.8,734.9 964.7,743.0" fill="none" stroke="#9db0d6" stroke-width="1.6" stroke-linejoin="round"/><polyline points="887.0,696.0 903.4,710.3 917.7,722.6 925.8,741.0" fill="none" stroke="#9fb1c4" stroke-width="1.25" stroke-linejoin="round"/><polyline points="893.1,600.3 895.4,609.3 881.8,636.4 866.0,665.7 877.3,659.0 913.4,665.7 927.0,677.0 951.8,670.3 969.8,674.8 967.6,683.8 956.3,690.6 958.6,697.3 965.3,706.4 963.1,724.4 985.6,724.4 994.7,737.9" fill="none" stroke="#6d6d6d" stroke-width="1.2" stroke-dasharray="2.5,2.5"/><g font-family="Liberation Sans" font-size="15" letter-spacing="0.1" fill="#3c4043" stroke="#fff" stroke-width="3" stroke-linejoin="round" paint-order="stroke"><text x="430" y="109">Szczebrzeszyn</text><text x="439" y="135">Brody Małe</text><text x="668" y="122">Żdanów</text><text x="803" y="135">Barchaczów</text><text x="805" y="166">Łabunie</text><text x="1101" y="221">Tyszowce</text><text x="1190" y="239">Mołodiatycze</text><text x="437" y="226">Zwierzyniec</text><text x="821" y="264">Krynice</text><text x="568" y="291">Bondyrz</text><text x="653" y="325">Krasnobród</text><text x="964" y="335">Rachanie</text><text x="1126" y="342">Łaszczów</text><text x="820" y="345">Tarnawatka</text><text x="520" y="416">Józefów</text><text x="633" y="438">Majdan</text><text x="633" y="453">Sopocki</text><text x="628" y="468">Pierwszy</text><text x="862" y="430">Sabaudia</text><text x="840" y="457">Tomaszów</text><text x="848" y="472">Lubelski</text><text x="1180" y="461">Ulhów</text><text x="614" y="493">Oseredek</text><text x="664" y="514">Susiec</text><text x="1003" y="497">Jarczów</text><text x="845" y="516">Jeziernia</text><text x="875" y="554">Bełżec</text><text x="421" y="569">Łukowa</text><text x="727" y="562">Paary</text><text x="1058" y="571">Machnów</text><text x="1071" y="586">Nowy</text><text x="1160" y="575">Uhnów</text><text x="1165" y="590">Угнів</text><text x="778" y="605">Narol</text><text x="944" y="609">Lubycza</text><text x="936" y="624">Królewska</text><text x="649" y="634">Ruda</text><text x="627" y="649">Różaniecka</text><text x="438" y="653">Obsza</text><text x="548" y="680">Stary</text><text x="535" y="695">Lubliniec</text><text x="996" y="702">Hrebenne</text><text x="895" y="737">Werchrata</text><text x="392" y="750">Stary Łuków</text><text x="580" y="754">Cieszanów</text><text x="745" y="754">Nowe Brusno</text><text x="1005" y="91">Kotlice</text><text x="735" y="89">Kalinowice</text><text x="1160" y="86">Mikulin</text><text x="1180" y="751">Hulcze</text><text x="435" y="436" text-anchor="end">Aleksandrów</text><text x="406" y="537.5" text-anchor="end">Podlek</text></g><circle cx="681.5" cy="484.5" r="27" fill="#fff" fill-opacity="0.85"/><g transform="translate(660.5,463.5) scale(1.75)"><path d="M12 2C8.13 2 5 5.13 5 9c0 5.25 7 13 7 13s7-7.75 7-13c0-3.87-3.13-7-7-7z" fill="#0288d1"/><circle cx="12" cy="9" r="2.7" fill="#fff"/></g><g transform="translate(859.0,410.5) scale(1.75)"><path d="M12 2C8.13 2 5 5.13 5 9c0 5.25 7 13 7 13s7-7.75 7-13c0-3.87-3.13-7-7-7z" fill="#0288d1"/><circle cx="12" cy="9" r="2.7" fill="#fff"/></g><g transform="translate(420.0,713.5) scale(1.75)"><path d="M12 2C8.13 2 5 5.13 5 9c0 5.25 7 13 7 13s7-7.75 7-13c0-3.87-3.13-7-7-7z" fill="#0288d1"/><circle cx="12" cy="9" r="2.7" fill="#fff"/></g><g transform="translate(708.0,51.5) scale(1.75)"><path d="M12 2C8.13 2 5 5.13 5 9c0 5.25 7 13 7 13s7-7.75 7-13c0-3.87-3.13-7-7-7z" fill="#0288d1"/><circle cx="12" cy="9" r="2.7" fill="#fff"/></g><g transform="translate(755.0,58.5) scale(1.75)"><path d="M12 2C8.13 2 5 5.13 5 9c0 5.25 7 13 7 13s7-7.75 7-13c0-3.87-3.13-7-7-7z" fill="#0288d1"/><circle cx="12" cy="9" r="2.7" fill="#fff"/></g><rect x="779" y="102" width="21" height="13" rx="1.5" fill="#d9534f"/><text x="789.5" y="112" font-family="Liberation Sans" font-weight="bold" font-size="11" fill="#fff" text-anchor="middle">17</text><rect x="991" y="662" width="20" height="13" rx="1.5" fill="#d9534f"/><text x="1001.0" y="672" font-family="Liberation Sans" font-weight="bold" font-size="11" fill="#fff" text-anchor="middle">17</text><rect x="852" y="373" width="33" height="13" rx="1.5" fill="#5d9a3e"/><text x="868.5" y="383" font-family="Liberation Sans" font-weight="bold" font-size="11" fill="#fff" text-anchor="middle">E372</text><rect x="1034" y="722" width="30" height="13" rx="1.5" fill="#2f7fd6"/><text x="1049.0" y="732" font-family="Liberation Sans" font-weight="bold" font-size="11" fill="#fff" text-anchor="middle">M09</text><g font-family="Liberation Sans" font-size="20" stroke="#fff" stroke-width="2.5" paint-order="stroke" stroke-linejoin="round"><text x="544" y="720" letter-spacing="0.2"><tspan fill="#4285f4">G</tspan><tspan fill="#ea4335">o</tspan><tspan fill="#fbbc05">o</tspan><tspan fill="#4285f4">g</tspan><tspan fill="#34a853">l</tspan><tspan fill="#ea4335">e</tspan></text></g><text x="612.5" y="719.6" font-family="Liberation Sans" font-size="16.5" fill="#6f8f7c" fill-opacity="0.9">My Maps</text><text x="651" y="719.6" font-family="Liberation Sans" font-size="14.5" letter-spacing="0.3" fill="#3c4043">Gorajec</text><circle cx="1187" cy="697" r="25.5" fill="#000" fill-opacity="0.07"/><circle cx="1187" cy="695.8" r="24.8" fill="#fff"/><g fill="none" stroke="#666" stroke-width="3"><polyline points="1182.8,687 1187,682.8 1191.2,687"/><polyline points="1182.8,704.6 1187,708.8 1191.2,704.6"/><polyline points="1179,691.4 1174.4,695.8 1179,700.2"/><polyline points="1195,691.4 1199.6,695.8 1195,700.2"/></g><rect x="1108" y="733" width="115" height="16" fill="#fff" fill-opacity="0.75"/><text x="1114" y="746" font-family="Liberation Sans" font-size="12.4" fill="#222">Skróty klawiszowe</text><defs><linearGradient id="sh" x1="0" x2="1"><stop offset="0" stop-color="#000" stop-opacity="0.16"/><stop offset="1" stop-color="#000" stop-opacity="0"/></linearGradient></defs><rect x="387" y="87" width="9" height="662" fill="url(#sh)"/></svg>
<div class="ab" style="left:0;top:1px;width:1223px;height:1px;background:#9a9a9a"></div>
<div class="ab" style="left:0;top:2px;width:1223px;height:1px;background:#909a9a"></div>
<div class="ab" style="left:0;top:1px;width:1px;height:748px;background:#9e9e9e"></div>
<div class="ab" style="left:1px;top:2px;width:1px;height:747px;background:#909a9a"></div>
<div class="ab" style="left:387px;top:3px;width:836px;height:84px;background:#303231;color:#fff;overflow:hidden">
  <div class="ab" style="right:809px;top:40px;font-size:13px;line-height:15px;white-space:nowrap;color:#fff">Mapa miejsc realizacji projektów w ramach pomocy finansowej indywidualnej</div>
  <div class="ab" style="left:0;top:62.9px;height:12.6px;width:836px;overflow:hidden">
   <div class="ab" style="right:699px;top:0;font-size:13px;line-height:15px;font-weight:bold;white-space:nowrap">Mapa utworzona za pomocą Moich Map Google.</div>
   <div class="ab" style="left:140.5px;top:0;font-size:13px;line-height:15px;font-weight:bold;white-space:nowrap;color:#9ccbf3">Utwórz własną mapę</div>
  </div>
  <svg class="ab" style="left:0;top:0" width="836" height="84">
   <g fill="#fff" stroke="#fff"><circle cx="725.2" cy="35" r="2.7" stroke="none"/><circle cx="712.8" cy="41.2" r="2.7" stroke="none"/><circle cx="725.2" cy="47.6" r="2.7" stroke="none"/>
   <polyline points="725.2,35 712.8,41.2 725.2,47.6" fill="none" stroke-width="1.4"/></g>
   <g fill="none" stroke="#fff" stroke-width="2.8"><polyline points="785.4000000000001,38.5 785.4000000000001,32.8 791,32.8"/><polyline points="802.5999999999999,32.8 808.2,32.8 808.2,38.5"/>
   <polyline points="785.4000000000001,44.6 785.4000000000001,50.3 791,50.3"/><polyline points="802.5999999999999,50.3 808.2,50.3 808.2,44.6"/></g>
  </svg>
</div>
<div class="ab" style="left:2px;top:3px;width:373px;height:746px;background:#f5f5f5;overflow:hidden">
  <div class="ab" style="left:0;top:0;width:373px;height:58px;background:#db4437">
    <svg class="ab" style="left:0;top:0" width="373" height="58">
      <path transform="translate(14.5,12.75) scale(1.225)" d="M20 11H7.83l5.59-5.59L12 4l-8 8 8 8 1.41-1.41L7.83 13H20v-2z" fill="#fff"/>
      <path transform="translate(326,12.3) scale(1.37)" d="M21.71 11.29l-9-9c-.39-.39-1.02-.39-1.410 0l-9 9c-.39.39-.39 1.02 0 1.41l9 9c.39.39 1.02.39 1.41 0l9-9c.39-.38.39-1.01 0-1.41zM14 14.5V12h-4v3H8v-4c0-.55.45-1 1-1h5V7.5l3.5 3.5-3.5 3.5z" fill="#fff"/>
    </svg>
    <div class="ab" style="left:61px;top:19.9px;font-size:17.5px;color:#fff;-webkit-text-stroke:0.45px #fff;white-space:nowrap;line-height:19px">Dywersyfikacja działalności fir...</div>
  </div>
  <div class="ab" style="left:-2px;top:-3px;width:373px;height:749px">
  <div class="lb" style="top:73.5px">Nazwa przedsięwzięcia</div><div class="vl" style="top:96.5px">Dywersyfikacja działalności firmy<br>Mateusz Koper i uodpornienie na<br>przyszłe kryzysy poprzez wprowadzenie<br>do oferty usługi wypożyczenia rowerów<br>elektrycznych - Region 5</div><div class="lb" style="top:248.9px">Nazwa</div><div class="vl" style="top:271.9px">Mateusz Koper</div><div class="lb" style="top:319.8px">Miejsce Realizacji Województwo</div><div class="vl" style="top:342.8px">LUBELSKIE</div><div class="lb" style="top:390.5px">Grantobiorca Miejscowość</div><div class="vl" style="top:413.5px">Susiec</div><div class="lb" style="top:461.0px">Grantobiorca Ulica</div><div class="vl" style="top:484.0px">Tomaszowska</div><div class="lb" style="top:531.5px">Grantobiorca Nr budynku</div><div class="vl" style="top:554.5px">160</div><div class="lb" style="top:602.3px">Grantobiorca Kod pocztowy</div><div class="vl" style="top:625.3px">22-672</div><div class="lb" style="top:673.0px">Wartość wsparcia</div><div class="vl" style="top:696.0px">472389.9</div>
  </div>
</div>
<div class="ab" style="left:375px;top:3px;width:12px;height:746px;background:#fafafa"></div>
<div class="ab" style="left:375px;top:16px;width:11px;height:733px;background:#c8c8c8;border-left:1px solid #b9b9b9"></div>
<div class="ab" style="left:374px;top:61px;width:1px;height:688px;background:#fff"></div>
</body></html>
